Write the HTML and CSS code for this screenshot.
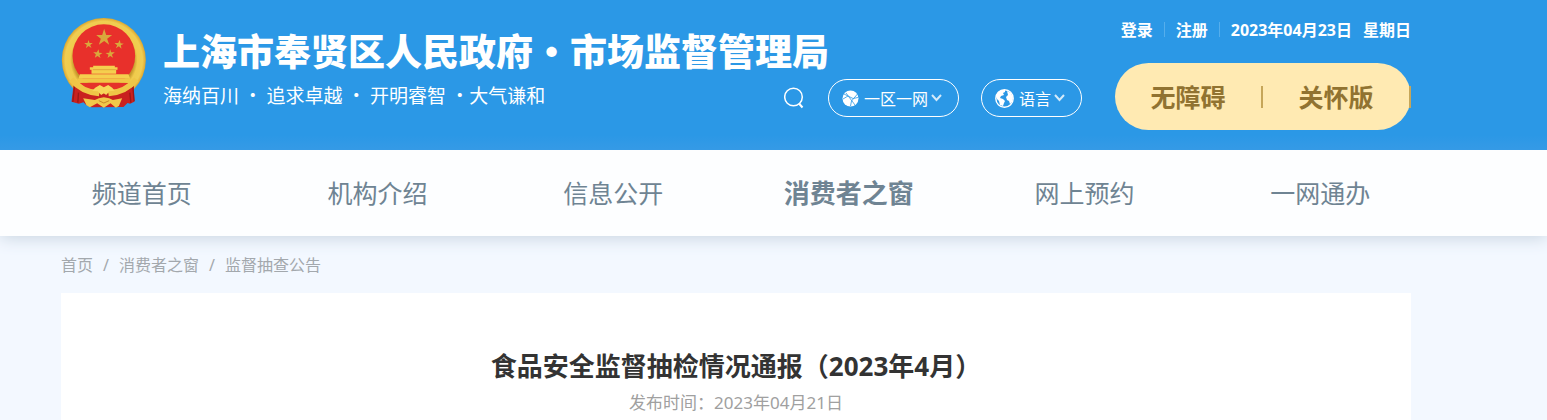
FILE: index.html
```html
<!DOCTYPE html>
<html lang="zh-CN">

<head>
    <meta charset="UTF-8">
    <meta name="viewport" content="width=device-width, initial-scale=1.0">
    <title>食品安全监督抽检情况通报（2023年4月）</title>
    <link rel="stylesheet" href="styles.css">
</head>

<body>
<header class="header">
    <div class="wrap header-inner">
        <svg class="emblem" viewBox="33 38 252 270" aria-hidden="true">
            <defs>
                <radialGradient id="gold" cx="50%" cy="50%" r="50%">
                    <stop offset="72%" stop-color="#c79a2c"/>
                    <stop offset="80%" stop-color="#f0cb4c"/>
                    <stop offset="92%" stop-color="#f0cd52"/>
                    <stop offset="100%" stop-color="#dda62e"/>
                </radialGradient>
            </defs>
            <circle cx="160" cy="164" r="126" fill="url(#gold)"/>
            <circle cx="160" cy="151" r="94" fill="#e8302b"/>
            <g fill="#d9a83c">
                <path d="M161 70l6 19h18l-15 11 6 18-15-11-16 11 6-18-14-11h18z"/>
                <path d="M114 104l3 9 10 0-8 6 4 9-9-6-8 7 3-10-8-6 10 0z"/>
                <path d="M208 104l2 10 10 1-9 5 2 10-8-7-9 6 4-9-8-7 11 0z"/>
                <path d="M144 132l2 10 10 1-9 6 3 9-9-6-8 5 3-10-8-6 11 0z"/>
                <path d="M179 132l3 9 11 0-9 7 4 9-9-5-8 6 3-10-9-5 11-1z"/>
            </g>
            <path d="M128 181h65v5h8v7h-4v12h-74v-12h-5v-7h10z" fill="#f5cf4e"/>
            <path d="M127 193h69" stroke="#d79434" stroke-width="2"/>
            <path d="M88 207h146l5 13H84z" fill="#f5cf4e"/>
            <path d="M80 220h161l-4 12H86z" fill="#f1c646"/>
            <path d="M70 234c25 21 50 28 72 30l36 0c28-3 52-13 72-30l1 55-12 6-8-2-12 12-96 1-16-7-8-8-14 4-22-6z" fill="#c9211f"/>
            <path d="M72 242l-5 48M84 262l-2 30M238 262l3 30M247 244l4 44" stroke="#9c1717" stroke-width="4" fill="none"/>
            <path d="M88 233h146l-20 17-54 6-54-6z" fill="#e5322a"/>
            <path d="M62 222c24 28 54 40 84 42M258 222c-24 28-54 40-84 42" fill="none" stroke="#efc647" stroke-width="17"/>
            <path d="M134 247l14-8 12 7 13-7 12 8 8 9-17 2-9 11-7-5-8 5-10-11-17-1z" fill="#f7d65a"/>
            <path d="M98 279l35 5 12-5 15-3 16 3 11 5 28-5-10 23-9 5-16-13-20 13-20-13-22 12-10-6z" fill="#f0c84a"/>
            <path d="M145 286l15 7 16-7" stroke="#c78727" stroke-width="3" fill="none"/>
        </svg>

        <div class="brand">
            <h1 class="site-name">上海市奉贤区人民政府•市场监督管理局</h1>
            <div class="brand-row">
                <p class="slogan">海纳百川 · 追求卓越 · 开明睿智 ·大气谦和</p>
                <div class="tools">
                    <button type="button" class="search-btn" aria-label="搜索">
                        <svg width="20" height="22" viewBox="0 0 20 22" fill="none" stroke="#fff">
                            <circle cx="9.5" cy="10" r="8.8" stroke-width="1.5"/>
                            <path d="M15 16.500l3.500 4" stroke-width="2"/>
                        </svg>
                    </button>
                    <button type="button" class="pill">
                        <svg width="17" height="17" viewBox="0 0 17 17">
                            <circle cx="8.500" cy="8.500" r="8" fill="#fff"/>
                            <path d="M1 3.500l10 5 5-1M4 3l9 12M15.500 4l-6 7-1 5M1 9l5-3" fill="none" stroke="#2b98e6" stroke-width=".8"/>
                        </svg>
                        <span>一区一网</span>
                        <svg class="arrow" width="11" height="8" viewBox="0 0 11 8">
                            <path d="M1 1l4.500 5L10 1" fill="none" stroke="#d3eafa" stroke-width="2"/>
                        </svg>
                    </button>
                    <button type="button" class="pill">
                        <svg width="19" height="19" viewBox="0 0 19 19">
                            <circle cx="9.500" cy="9.500" r="8.700" fill="none" stroke="#fff" stroke-width="1.400"/>
                            <path d="M1 7l2-4 4-2 3 0 0 2-2 1 1 2-3 1-1 2 3 1 2 2-1 2-1 3-3-1-1-4-2-2zM12 2l4 2 2 5-1 4-2 2-1-3-2-1-1-3 2-2z" fill="#fff"/>
                        </svg>
                        <span>语言</span>
                        <svg class="arrow" width="11" height="8" viewBox="0 0 11 8">
                            <path d="M1 1l4.500 5L10 1" fill="none" stroke="#d3eafa" stroke-width="2"/>
                        </svg>
                    </button>
                </div>
            </div>
        </div>

        <div class="side">
            <div class="top-links">
                <a href="#">登录</a>
                <span class="line"></span>
                <a href="#">注册</a>
                <span class="line"></span>
                <span>2023年04月23日</span>
                <span>星期日</span>
            </div>
            <div class="care">
                <a href="#">无障碍</a>
                <a href="#">关怀版</a>
            </div>
        </div>
    </div>
</header>

<nav class="nav">
    <a href="#">频道首页</a>
    <a href="#">机构介绍</a>
    <a href="#">信息公开</a>
    <a href="#" class="active">消费者之窗</a>
    <a href="#">网上预约</a>
    <a href="#">一网通办</a>
</nav>

<main class="wrap">
    <div class="breadcrumb">
        <a href="#">首页</a>
        <span>/</span>
        <a href="#">消费者之窗</a>
        <span>/</span>
        <a href="#">监督抽查公告</a>
    </div>
    <article class="article">
        <h2>食品安全监督抽检情况通报（2023年4月）</h2>
        <p class="time">发布时间：2023年04月21日</p>
    </article>
</main>
</body>

</html>
```

FILE: styles.css
```css
* {
    box-sizing: border-box;
}

body {
    margin: 0;
    font-family: "Noto Sans", "Noto Sans CJK SC", sans-serif;
    font-size: 16px;
    background-color: #f3f8ff;
}

a {
    color: inherit;
    text-decoration: none;
}

h1,
h2,
p {
    margin: 0;
}

.wrap {
    margin: 0 136px 0 61px;
}

/* header */
.header {
    position: relative;
    z-index: 1;
    height: 150px;
    background: linear-gradient(#2b98e6 90%, #359ae6);
    color: #fff;
    overflow: hidden;
}

.header-inner {
    display: flex;
}

.emblem {
    width: 85px;
    height: 90px;
    margin-top: 18px;
    flex-shrink: 0;
}

.brand {
    flex: 1;
    padding-top: 27px;
    margin: 0 33px 0 17px;
    font-family: "Noto Sans CJK SC", sans-serif;
    white-space: nowrap;
}

.site-name {
    font-size: 37px;
    font-weight: 900;
    line-height: 46px;
    margin-bottom: 6px;
}

.brand-row {
    display: flex;
    justify-content: space-between;
}

.slogan {
    font-size: 19px;
    line-height: 32px;
}

.tools {
    display: flex;
    align-items: center;
}

.tools button {
    display: flex;
    align-items: center;
    color: #fff;
    background: none;
    border: none;
    font-family: inherit;
    font-size: 16px;
    cursor: pointer;
}

.tools .search-btn {
    padding: 0;
    margin-right: 24px;
}

.tools .pill {
    height: 38px;
    padding: 0 16px 0 13px;
    gap: 5px;
    border: 1px solid #fff;
    border-radius: 19px;
}

.pill + .pill {
    margin-left: 22px;
}

.pill .arrow {
    margin-left: -2px;
}

.side {
    width: 296px;
    padding-top: 17px;
}

.top-links {
    display: flex;
    justify-content: flex-end;
    align-items: center;
    gap: 11px;
    height: 24px;
    font-weight: bold;
    white-space: nowrap;
}

.line {
    width: 1px;
    height: 15px;
    background-color: #55aeec;
}

.care {
    display: flex;
    align-items: center;
    height: 67px;
    margin-top: 22px;
    border-radius: 34px;
    background-color: #ffeab2;
}

.care a {
    flex: 1;
    border-right: 2px solid #c6a659;
    color: #917331;
    font-size: 25px;
    font-weight: bold;
    line-height: 22px;
    text-align: center;
}

/* nav */
.nav {
    display: grid;
    grid-template-columns: repeat(6, 1fr);
    padding: 0 109px 0 24px;
    background-color: #fdfeff;
    color: #6f8493;
    font-size: 25px;
    line-height: 86px;
    text-align: center;
    box-shadow: 0 2px 16px #c8d4e0;
}

.nav .active {
    font-size: 26px;
    font-weight: bold;
}

/* content */
.breadcrumb {
    display: flex;
    gap: 10px;
    height: 57px;
    line-height: 58px;
    color: #a3a8ad;
}

.article {
    padding: 54px 20px 4px;
    background-color: #fff;
    text-align: center;
}

.article h2 {
    color: #333;
    font-size: 26px;
    line-height: 38px;
}

.time {
    margin-top: 5px;
    color: #a0a0a0;
    font-size: 17px;
    line-height: 26px;
}
```
